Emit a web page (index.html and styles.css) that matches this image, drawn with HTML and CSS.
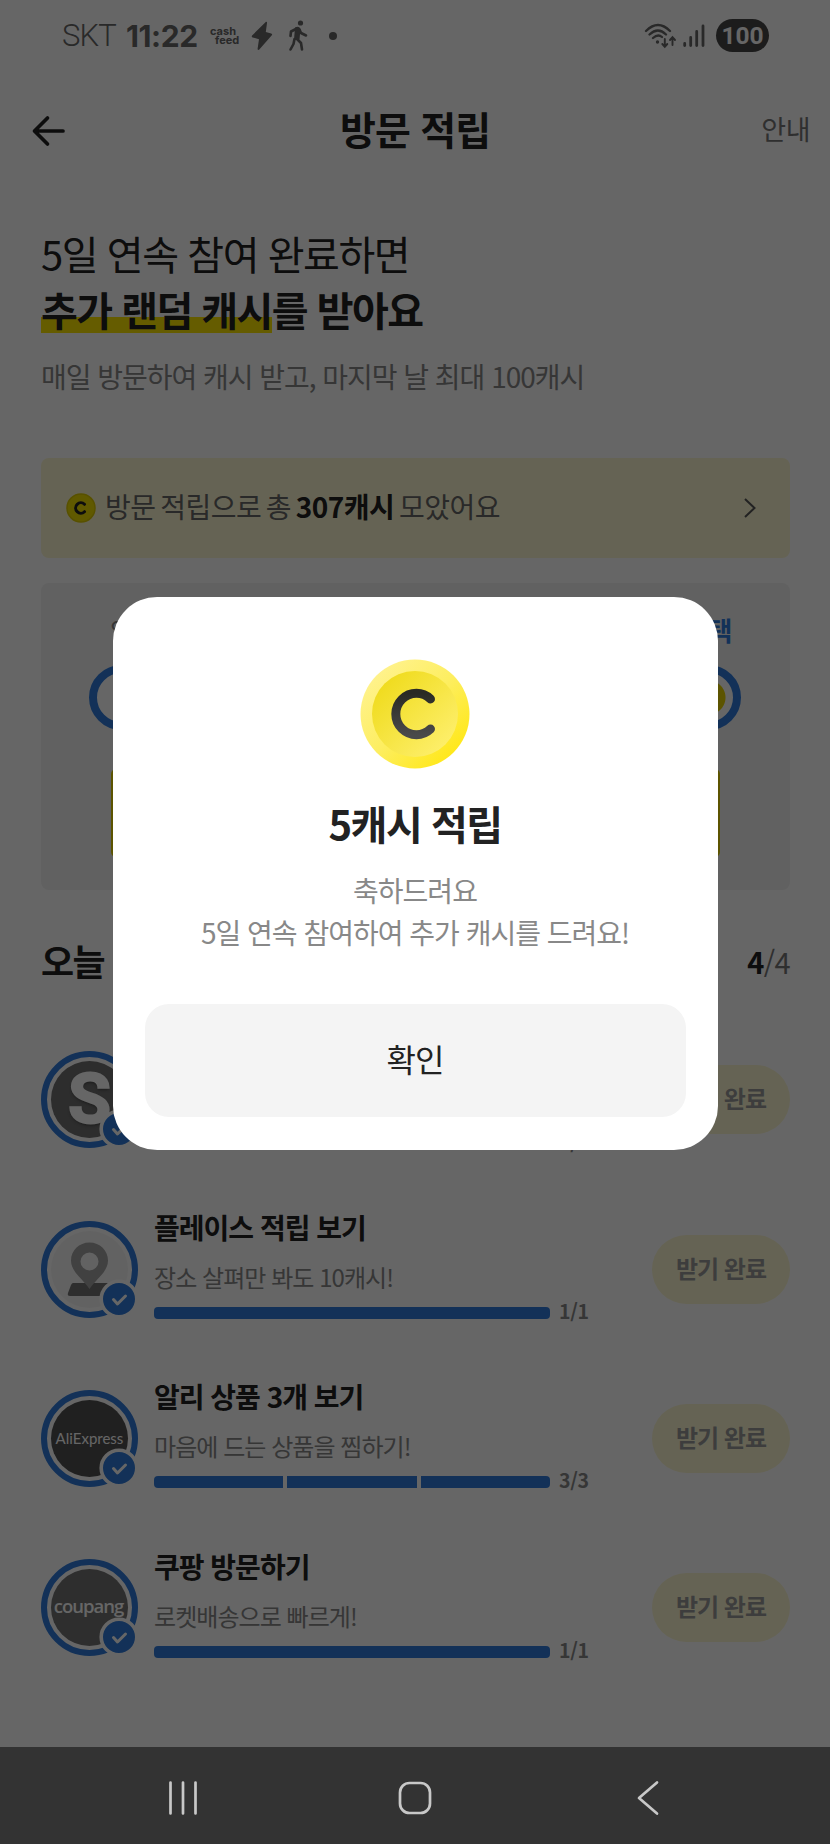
FILE: index.html
```html
<!DOCTYPE html>
<html lang="ko">
<head>
<meta charset="utf-8">
<title>방문 적립</title>
<link rel="stylesheet" href="styles.css">
</head>
<body>
<div class="screen">
  <div class="status">
    <span class="carrier">SKT</span>
    <span class="clock">11:22</span>
    <span class="cashfeed"><span>cash</span><span class="feed">feed</span></span>
    <svg class="bolt" width="22" height="30" viewBox="0 0 22 30"><path d="M14.5 1.2c.8-.8 1.7-.3 1.5.8L14.800 11l5.400 1.500c1 .3 1.200 1.100.6 1.800L8.300 28.500c-.8.9-1.900.4-1.700-.8L8 18.200 1.600 16.400C.6 16.100.5 15.200 1.100 14.500Z"/></svg>
    <svg class="walk" width="20" height="32" viewBox="0 0 20 32"><circle cx="12.500" cy="3" r="2.600"/><path class="stroke" d="M9 8.500 3 11.500 2.500 16M11.500 9.500 13 13l5 2.500M6.500 19 5.500 24 2.500 29.500M9 19l4 4 1 6.500"/><path d="M7 7.500Q11 5.500 12.500 9L11.500 19.500 6 20Z"/></svg>
    <i class="dot"></i>
    <span class="spacer"></span>
    <svg class="wifi" width="34" height="28" viewBox="0 0 34 28"><path d="M2 9Q14-3 26 9M5.500 12.500Q14 4.500 22 12.500M9 16Q14 11.500 18 15"/><path class="thin" d="M20.800 17v7.500M18.300 22l2.500 2.800 2.500-2.800M28.500 23v-7.500M26 18l2.500-2.800 2.500 2.800"/><circle cx="13.500" cy="20" r="1.700"/></svg>
    <svg class="signal" width="22" height="24" viewBox="0 0 22 24"><path d="M1.700 19.500V21.500M7.700 13.500V21.500M13.700 7.500V21.500M20 2V21.500"/></svg>
    <span class="battery">100</span>
  </div>
  <div class="header">
    <svg class="arrow" width="36" height="32" viewBox="0 0 36 32"><path d="M17.500 3 4.500 16l13 13M4.500 16H33"/></svg>
    <h1>방문 적립</h1>
    <span class="guide">안내</span>
  </div>
  <div class="intro">
    <p class="lead">5일 연속 참여 완료하면</p>
    <p class="lead strong"><mark>추가 랜덤 캐시</mark>를 받아요</p>
    <p class="sub">매일 방문하여 캐시 받고, 마지막 날 최대 100캐시</p>
  </div>
  <div class="total">
    <svg class="coin" width="30" height="30" viewBox="0 0 30 30"><circle cx="15" cy="15" r="14" fill="#f1df00" stroke="#dcca00" stroke-width="1.500"/><path d="M18.500 11.300a5.200 5.200 0 1 0 0 7.400"/></svg>
    <span class="total-text">방문 적립으로 총 <b>307캐시</b> 모았어요</span>
    <svg class="chev" width="14" height="22" viewBox="0 0 14 22"><path d="M2 2 11.500 11 2 20"/></svg>
  </div>
  <div class="panel">
    <div class="days">
      <div class="day"><span>일</span><i></i></div>
      <div class="day"><span>월</span><i></i></div>
      <div class="day"><span>화</span><i></i></div>
      <div class="day"><span>수</span><i></i></div>
      <div class="day last"><span>혜택</span><i></i></div>
    </div>
    <div class="claim"></div>
  </div>
  <div class="section"><h2>오늘</h2><span class="count"><b>4</b>/4</span></div>
  <div class="list">
    <div class="row">
      <div class="icon s"><span class="disc">S</span><svg class="badge" width="40" height="40" viewBox="0 0 40 40"><circle cx="20" cy="20" r="17.800"/><path d="m14.500 20.500 4 4.500 8-8"/></svg></div>
      <div class="body"><h3>쇼핑 적립 보기</h3><p>상품 보고 캐시 받기!</p><div class="meter"><div class="bar"><i></i></div><span>1/1</span></div></div>
      <span class="pill">받기 완료</span>
    </div>
    <div class="row">
      <div class="icon place"><span class="disc"><svg width="42" height="56" viewBox="0 0 42 56"><path d="M6 42H42L36 55H3Q0 55 1 52L4 44Q5 42 6 42Z" fill="#737373"/><path fill-rule="evenodd" d="M22.500 1.500C12 1.500 4 9.500 4 19.500 4 31 16 38 22.500 48 29 38 41 31 41 19.500 41 9.500 33 1.500 22.500 1.500ZM22.500 11.500a9 9 0 1 1 0 18 9 9 0 0 1 0-18Z" fill="#a3a3a3"/></svg></span><svg class="badge" width="40" height="40" viewBox="0 0 40 40"><circle cx="20" cy="20" r="17.800"/><path d="m14.500 20.500 4 4.500 8-8"/></svg></div>
      <div class="body"><h3>플레이스 적립 보기</h3><p>장소 살펴만 봐도 10캐시!</p><div class="meter"><div class="bar"><i></i></div><span>1/1</span></div></div>
      <span class="pill">받기 완료</span>
    </div>
    <div class="row">
      <div class="icon ali"><span class="disc">AliExpress</span><svg class="badge" width="40" height="40" viewBox="0 0 40 40"><circle cx="20" cy="20" r="17.800"/><path d="m14.500 20.500 4 4.500 8-8"/></svg></div>
      <div class="body"><h3>알리 상품 3개 보기</h3><p>마음에 드는 상품을 찜하기!</p><div class="meter"><div class="bar"><i></i><i></i><i></i></div><span>3/3</span></div></div>
      <span class="pill">받기 완료</span>
    </div>
    <div class="row">
      <div class="icon coupang"><span class="disc">coupang</span><svg class="badge" width="40" height="40" viewBox="0 0 40 40"><circle cx="20" cy="20" r="17.800"/><path d="m14.500 20.500 4 4.500 8-8"/></svg></div>
      <div class="body"><h3>쿠팡 방문하기</h3><p>로켓배송으로 빠르게!</p><div class="meter"><div class="bar"><i></i></div><span>1/1</span></div></div>
      <span class="pill">받기 완료</span>
    </div>
  </div>
  <div class="scrim"></div>
  <div class="modal">
    <svg class="bigcoin" width="112" height="112" viewBox="0 0 112 112">
      <defs>
        <linearGradient id="rim" x1="0" y1="0" x2="1" y2="1"><stop offset=".15" stop-color="#fff28a"/><stop offset=".5" stop-color="#fdee60"/><stop offset=".85" stop-color="#ffe81c"/></linearGradient>
        <linearGradient id="face" x1="0" y1="0" x2="1" y2="1"><stop offset=".15" stop-color="#f0dc20"/><stop offset=".85" stop-color="#fdee68"/></linearGradient>
        <linearGradient id="ink" x1="0" y1="0" x2="0" y2="1"><stop offset="0" stop-color="#2a2a24"/><stop offset="1" stop-color="#4a4a4a"/></linearGradient>
      </defs>
      <circle cx="56" cy="56" r="54.500" fill="url(#rim)"/>
      <circle cx="56" cy="56" r="43" fill="url(#face)"/>
      <path d="M71.500 41c-4-3.800-8.500-5.700-14-5.700a20.700 20.700 0 0 0 0 41.400c5.500 0 10-1.900 14-5.700" fill="none" stroke="url(#ink)" stroke-width="9" stroke-linecap="round"/>
    </svg>
    <h4>5캐시 적립</h4>
    <p>축하드려요<br>5일 연속 참여하여 추가 캐시를 드려요!</p>
    <div class="ok">확인</div>
  </div>
  <div class="nav">
    <svg width="32" height="36" viewBox="0 0 32 36"><path d="M3.500 2.500v31M16 2.500v31M28.500 2.500v31"/></svg>
    <svg class="home" width="36" height="36" viewBox="0 0 36 36"><rect x="3" y="3" width="30" height="30" rx="9.500"/></svg>
    <svg width="24" height="36" viewBox="0 0 24 36"><path d="M21 2.500 3 18l18 15.500"/></svg>
  </div>
</div>
</body>
</html>
```
FILE: styles.css
```css
* { box-sizing: border-box; margin: 0; padding: 0; }
body { font-family: "Noto Sans CJK KR", sans-serif; color: #222; background: #fff; }
h1, h2, h3, h4 { font-weight: 700; }
svg { display: block; flex: none; }
p, h1, h2, h3, h4, span { white-space: nowrap; }
.screen { position: relative; width: 830px; height: 1844px; overflow: hidden; display: flex; flex-direction: column; background: #fff; }

.status { height: 71px; display: flex; align-items: center; padding: 0 61px 0 62px; color: #666; font-family: Inter, sans-serif; }
.carrier { font: 300 31px/1 Roboto, sans-serif; letter-spacing: -.8px; width: 64px; }
.clock { font: 700 30px/1 Inter, sans-serif; width: 84px; letter-spacing: -.4px; }
.cashfeed { display: flex; flex-direction: column; font: 700 11px/9px Inter, sans-serif; width: 41px; }
.feed { padding-left: 5px; }
.bolt, .walk { fill: #666; }
.walk { margin-left: 15px; }
.walk .stroke { fill: none; stroke: #666; stroke-width: 2.600; stroke-linecap: round; stroke-linejoin: round; }
.dot { width: 8px; height: 8px; border-radius: 50%; background: #666; margin-left: 21px; }
.spacer { flex: 1; }
.wifi { fill: none; stroke: #666; stroke-width: 2.300; stroke-linecap: round; }
.wifi .thin { stroke-width: 1.900; }
.wifi circle { fill: #666; stroke: none; }
.signal { stroke: #666; stroke-width: 2.800; stroke-linecap: round; margin: 0 11px 0 5px; }
.battery { width: 53px; height: 33px; border-radius: 17px; background: #484848; color: #fff; font: 700 24.500px/34px Roboto, sans-serif; text-align: center; }

.header { height: 119px; display: flex; align-items: center; justify-content: space-between; padding: 0 20px 0 30px; }
.header h1 { font-size: 39px; letter-spacing: -.8px; padding: 0 0 5px 3px; }
.arrow { fill: none; stroke: #222; stroke-width: 3.700; stroke-linecap: round; stroke-linejoin: round; }
.guide { font-size: 27px; color: #777; letter-spacing: -.5px; padding-bottom: 4px; }

.intro { height: 268px; padding: 35px 41px 0; }
.lead { font-size: 40px; line-height: 56px; letter-spacing: -1.450px; }
.lead.strong { font-weight: 700; letter-spacing: -1.550px; }
mark { color: inherit; background: linear-gradient(#fde500, #fde500) 0 37px / 100% 16px no-repeat; }
.sub { font-size: 28px; line-height: 40px; margin-top: 19px; color: #888; letter-spacing: -1.030px; }

.total { height: 100px; margin: 0 40px 0 41px; border-radius: 8px; background: #fdf8d2; display: flex; align-items: center; padding: 0 33px 0 24px; }
.coin { margin-left: 1px; }
.coin path { fill: none; stroke: #222; stroke-width: 3; stroke-linecap: round; }
.total-text { flex: 1; margin-left: 9px; padding-bottom: 5px; font-size: 28px; letter-spacing: -.5px; word-spacing: -2.700px; color: #666; }
.total-text b { color: #222; }
.chev { fill: none; stroke: #555; stroke-width: 2; }

.panel { height: 307px; margin: 25px 40px 0 41px; border-radius: 8px; background: #f3f3f3; padding: 28px 8px 0 7px; }
.days { display: grid; grid-template-columns: repeat(5, 1fr); }
.day { display: flex; flex-direction: column; align-items: center; font-size: 25px; line-height: 38px; color: #888; }
.day i { width: 65px; height: 65px; border-radius: 50%; border: 8px solid #307cdc; background: #fff; margin-top: 16px; }
.last { color: #307cdc; font-weight: 700; font-size: 26px; }
.last i { background: radial-gradient(circle, #e5d300 16.500px, #fff 17.500px); }
.claim { height: 88px; margin: 39px 62px 0 63px; border-radius: 5px; background: #e5d300; }

.section { height: 125px; padding: 0 40px 0 41px; display: flex; justify-content: space-between; align-items: flex-start; }
.section h2 { font-size: 36px; line-height: 52px; margin-top: 44px; letter-spacing: -1.500px; }
.count { font-size: 29px; line-height: 44px; margin-top: 49px; color: #777; letter-spacing: -.6px; }
.count b { color: #222; }

.list { padding: 0 40px 0 41px; display: grid; grid-auto-rows: 169.400px; }
.row { display: flex; align-items: center; }
.icon { position: relative; width: 97px; height: 97px; flex: none; border-radius: 50%; border: 6px solid #307cdc; display: grid; place-items: center; }
.disc { width: 77px; height: 77px; border-radius: 50%; display: grid; place-items: center; color: #fff; background: #777; }
.badge { position: absolute; left: 52px; top: 52px; }
.badge circle { fill: #307cdc; stroke: #fff; stroke-width: 3.600; }
.badge path { fill: none; stroke: #fff; stroke-width: 3; stroke-linecap: round; stroke-linejoin: round; }
.s .disc { background: #707070; font: 700 70px/77px Roboto, sans-serif; -webkit-text-stroke: 2px #fff; text-shadow: 0 2px 3px #444; }
.place .disc { background: #f6f6f6; padding: 0 4px 1px 0; }
.ali .disc { background: #505050; font: 400 15px/1 Lato, sans-serif; }
.coupang .disc { background: #737373; font: 600 18.500px/1 "Open Sans", sans-serif; letter-spacing: -1px; padding: 0 2px 4px 0; }
.body { margin-left: 16px; width: 460px; padding-bottom: 4px; }
.body h3 { font-size: 28px; line-height: 40px; letter-spacing: -1px; margin-top: -4px; }
.body p { font-size: 24px; line-height: 36px; margin-top: 12px; color: #888; letter-spacing: -.95px; }
.meter { display: flex; align-items: center; height: 20px; margin-top: 8px; }
.bar { width: 396px; height: 12px; display: flex; gap: 4px; border-radius: 4px; overflow: hidden; }
.bar i { flex: 1; background: #307cdc; }
.meter span { margin-left: 9px; padding-bottom: 4px; font-size: 19.500px; font-weight: 700; color: #888; line-height: 20px; letter-spacing: -.3px; }
.pill { width: 138px; height: 69px; margin-left: auto; border-radius: 35px; background: #fdf8d2; color: #999; font-weight: 700; font-size: 24px; line-height: 65px; text-align: center; letter-spacing: -1px; }

.scrim { position: absolute; inset: 0; background: rgba(0, 0, 0, .6); }
.modal { position: absolute; left: 112.500px; top: 597px; width: 605px; height: 553px; border-radius: 44px; background: #fff; padding: 61px 32px 0; display: flex; flex-direction: column; align-items: center; text-align: center; }
.modal h4 { font-size: 40px; line-height: 58px; letter-spacing: -1.500px; margin-top: 24px; }
.modal p { font-size: 28px; line-height: 42px; margin-top: 17px; color: #888; letter-spacing: -1px; }
.ok { width: 541px; height: 113px; border-radius: 24px; background: #f4f4f4; margin-top: 51px; font-size: 32px; line-height: 108px; letter-spacing: -1px; }

.nav { position: absolute; left: 0; right: 0; bottom: 0; height: 97px; background: #333; display: flex; align-items: center; justify-content: space-between; padding: 4px 170px 0 167px; }
.nav svg { fill: none; stroke: #c8c8c8; stroke-width: 2.700; stroke-linecap: round; stroke-linejoin: round; }
.nav .home { margin-right: 6px; }
```
